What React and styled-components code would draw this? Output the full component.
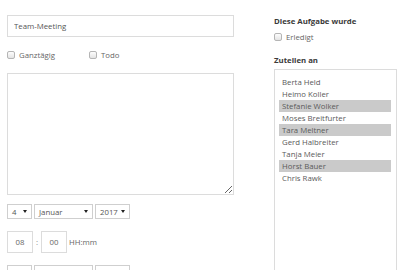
import React from "react";
import styled, { createGlobalStyle } from "styled-components";

const Global = createGlobalStyle`
  html, body { margin: 0; padding: 0; background: #fff; }
  body { font-family: "Open Sans", "Liberation Sans", sans-serif; color: #555; overflow: hidden; }
  * { box-sizing: border-box; }
`;

const Page = styled.div`
  display: flex;
  align-items: flex-start;
  width: 400px;
  height: 270px;
  overflow: hidden;
  padding-left: 7px;
`;

const LeftCol = styled.div`
  width: 227px;
  padding-top: 15px;
  display: flex;
  flex-direction: column;
  flex-shrink: 0;
  & > * { flex-shrink: 0; }
`;

const RightCol = styled.div`
  margin-left: 40px;
  width: 123px;
  padding-top: 15px;
  display: flex;
  flex-direction: column;
  flex-shrink: 0;
  & > * { flex-shrink: 0; }
`;

const TextInput = styled.input`
  width: 227px;
  height: 22px;
  margin: 0;
  border: 1px solid #dcdcdc;
  padding: 0 0 0 6px;
  font: 7.8px "Open Sans", sans-serif;
  color: #555;
  outline: none;
`;

const CheckRow = styled.div`
  display: flex;
  align-items: center;
  height: 10px;
  margin-top: ${p => p.$mt || 0}px;
`;

const CheckItem = styled.label`
  display: flex;
  align-items: center;
  gap: 4px;
  width: ${p => p.$w ? p.$w + "px" : "auto"};
  font-size: 7.8px;
  color: #666;
`;

const Box = styled.span`
  display: inline-block;
  width: 8px;
  height: 8px;
  border: 1px solid #b5b5b5;
  border-radius: 2px;
  background: linear-gradient(#fdfdfd, #e4e4e4);
`;

const Area = styled.textarea`
  margin: 13px 0 0 0;
  width: 227px;
  height: 122px;
  border: 1px solid #dcdcdc;
  outline: none;
  resize: both;
`;

const SelectRow = styled.div`
  display: flex;
  gap: 2px;
  margin-top: ${p => p.$mt}px;
`;

const Select = styled.div`
  width: ${p => p.$w}px;
  height: 15px;
  border: 1px solid #cfcfcf;
  display: flex;
  align-items: center;
  justify-content: space-between;
  padding: 0 4px 0 4px;
  font-size: 7.8px;
  color: #555;
  flex-shrink: 0;
`;

const Arrow = styled.span`
  width: 0;
  height: 0;
  border-left: 2px solid transparent;
  border-right: 2px solid transparent;
  border-top: 3px solid #222;
`;

const TimeRow = styled.div`
  display: flex;
  align-items: center;
  margin-top: 12px;
  font-size: 7.8px;
  color: #666;
`;

const TimeBox = styled.div`
  width: 26px;
  height: 22px;
  border: 1px solid #dcdcdc;
  display: flex;
  align-items: center;
  justify-content: center;
  color: #666;
`;

const Colon = styled.span`
  width: 8px;
  text-align: center;
  color: #888;
`;

const Hint = styled.span`
  margin-left: 2px;
`;

const Heading = styled.div`
  font-weight: 700;
  font-size: 7.8px;
  color: #3a3a3a;
  line-height: 12px;
  margin-top: ${p => p.$mt || 0}px;
`;

const ListBox = styled.div`
  margin-top: 3px;
  width: 123px;
  height: 220px;
  border: 1px solid #dcdcdc;
  padding: 6px 5px 0 4px;
`;

const Item = styled.div`
  height: 12px;
  line-height: 12px;
  padding-left: 3px;
  font-size: 7.8px;
  color: #5a5a5a;
  background: ${p => (p.$sel ? "#cacaca" : "transparent")};
`;

const people = [
  ["Berta Held", false],
  ["Heimo Koller", false],
  ["Stefanie Wolker", true],
  ["Moses Breitfurter", false],
  ["Tara Meltner", true],
  ["Gerd Halbreiter", false],
  ["Tanja Meier", false],
  ["Horst Bauer", true],
  ["Chris Rawk", false],
];

const DateSelects = ({ mt }) => (
  <SelectRow $mt={mt}>
    <Select $w={25}>4<Arrow /></Select>
    <Select $w={59}>Januar<Arrow /></Select>
    <Select $w={35}>2017<Arrow /></Select>
  </SelectRow>
);

export default function App() {
  return (
    <>
      <Global />
      <Page>
        <LeftCol>
          <TextInput readOnly value="Team-Meeting" />
          <CheckRow $mt={13}>
            <CheckItem $w={82}><Box />Ganztägig</CheckItem>
            <CheckItem><Box />Todo</CheckItem>
          </CheckRow>
          <Area readOnly />
          <DateSelects mt={9} />
          <TimeRow>
            <TimeBox>08</TimeBox>
            <Colon>:</Colon>
            <TimeBox>00</TimeBox>
            <Hint>HH:mm</Hint>
          </TimeRow>
          <DateSelects mt={12} />
        </LeftCol>
        <RightCol>
          <Heading>Diese Aufgabe wurde</Heading>
          <CheckRow $mt={5}>
            <CheckItem><Box />Erledigt</CheckItem>
          </CheckRow>
          <Heading $mt={12}>Zuteilen an</Heading>
          <ListBox>
            {people.map(([n, s]) => (
              <Item key={n} $sel={s}>{n}</Item>
            ))}
          </ListBox>
        </RightCol>
      </Page>
    </>
  );
}
